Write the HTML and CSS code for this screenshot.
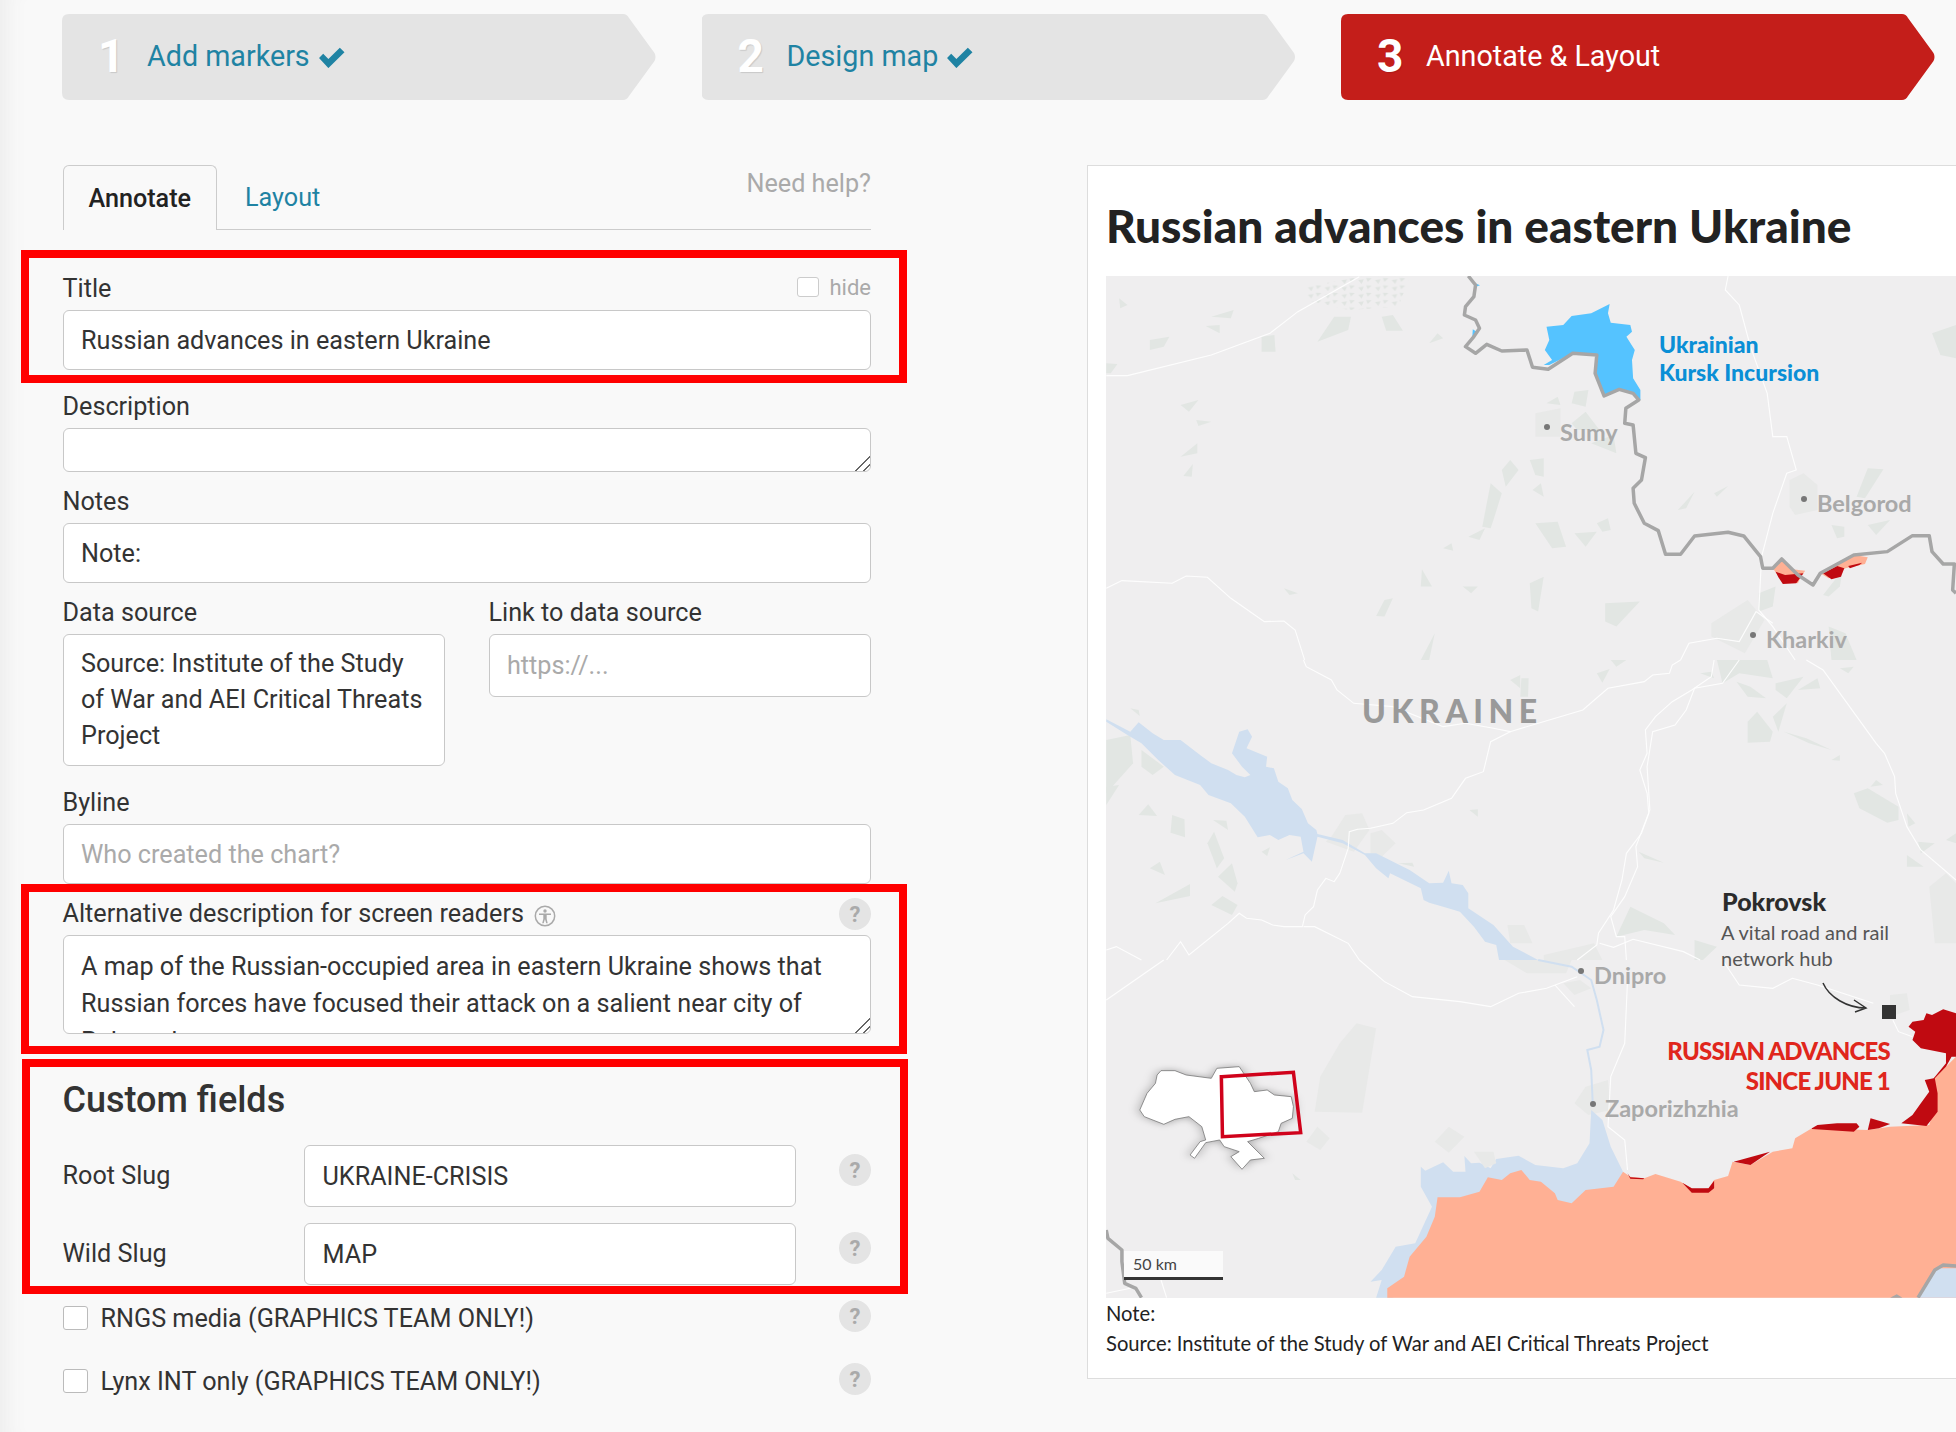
FILE: index.html
```html
<!DOCTYPE html>
<html lang="en">
<head>
<meta charset="utf-8">
<title>Annotate &amp; Layout</title>
<link rel="stylesheet" href="styles.css">
</head>
<body>
<div class="page">
  <nav class="steps">
    <div class="step"><span class="num">1</span><span class="step-label">Add markers</span>
      <svg class="tick" viewBox="0 0 26 20"><path d="M1 10.5 5 6.5 10 11.5 21 .5 25.500 5 10 20.200Z"/></svg></div>
    <div class="step"><span class="num">2</span><span class="step-label">Design map</span>
      <svg class="tick" viewBox="0 0 26 20"><path d="M1 10.5 5 6.5 10 11.5 21 .5 25.500 5 10 20.200Z"/></svg></div>
    <div class="step step-active"><span class="num">3</span><span class="step-label">Annotate &amp; Layout</span></div>
  </nav>

  <div class="content">
    <form class="form">
      <div class="tabs">
        <a class="tab tab-active">Annotate</a>
        <a class="tab">Layout</a>
        <a class="need-help">Need help?</a>
      </div>

      <div class="field field-wide">
        <div class="field-head"><label class="lbl">Title</label>
          <span class="hide"><span class="box box-sm"></span>hide</span></div>
        <input class="ctl" value="Russian advances in eastern Ukraine">
      </div>
      <div class="field">
        <div class="field-head"><label class="lbl">Description</label></div>
        <textarea class="ctl ta-desc"></textarea>
      </div>
      <div class="field">
        <div class="field-head"><label class="lbl">Notes</label></div>
        <input class="ctl" value="Note:">
      </div>
      <div class="field-pair">
        <div class="pair-a">
          <div class="field-head"><label class="lbl">Data source</label></div>
          <textarea class="ctl ta-source">Source: Institute of the Study of War and AEI Critical Threats Project</textarea>
        </div>
        <div class="pair-b">
          <div class="field-head"><label class="lbl">Link to data source</label></div>
          <input class="ctl ctl-link" placeholder="https://...">
        </div>
      </div>
      <div class="field">
        <div class="field-head"><label class="lbl">Byline</label></div>
        <input class="ctl" placeholder="Who created the chart?">
      </div>
      <div class="field">
        <div class="field-head"><label class="lbl">Alternative description for screen readers
          <svg class="a11y" viewBox="0 0 22 22"><circle cx="11" cy="11" r="9.700"/><circle class="a11y-fill" cx="11" cy="6" r="1.700"/><path class="a11y-fill" d="M5 8.500h12v1.400h-4.300v4.100l1 4.200h-1.500l-1.200-4h-.1l-1.200 4H8.200l1.100-4.200V9.900H5z"/></svg></label>
          <span class="help">?</span></div>
        <textarea class="ctl ta-alt">A map of the Russian-occupied area in eastern Ukraine shows that Russian forces have focused their attack on a salient near city of Pokrovsk</textarea>
      </div>

      <h2 class="custom-title">Custom fields</h2>
      <div class="slug-row"><label class="lbl">Root Slug</label><input class="ctl" value="UKRAINE-CRISIS"><span class="help help-up">?</span></div>
      <div class="slug-row"><label class="lbl">Wild Slug</label><input class="ctl" value="MAP"><span class="help help-up">?</span></div>
      <div class="check-row check-first"><span class="box"></span><span class="lbl">RNGS media (GRAPHICS TEAM ONLY!)</span><span class="help">?</span></div>
      <div class="check-row"><span class="box"></span><span class="lbl">Lynx INT only (GRAPHICS TEAM ONLY!)</span><span class="help">?</span></div>
    </form>

    <section class="chart">
      <h1 class="chart-title">Russian advances in eastern Ukraine</h1>
      <svg class="map" viewBox="1106 276 850 1022" width="850" height="1022">
        <defs>
          <pattern id="speckle" width="30" height="22" patternUnits="userSpaceOnUse">
            <polygon class="speck" points="2,2 12,3 5,14"/>
            <polygon class="speck" points="18,8 28,6 24,20"/>
          </pattern>
        </defs>
        <rect x="1106" y="276" width="850" height="1022" class="land"/>

        <g transform="translate(1080 160) scale(.5587 .3333)">
          <polygon class="speckled" points="405,380 500,350 590,350 570,440 480,450 405,420"/>
          <g class="patch-lt">
            <polygon points="815,760 860,745 860,830 815,830"/>
            <polygon points="1270,960 1295,940 1320,975 1320,1050 1280,1065 1270,1040"/>
            <polygon points="1130,1390 1195,1320 1225,1380 1190,1480 1130,1430"/>
          </g>
          <g class="patch">
            <polygon points="70,415 85,435 72,445"/><polygon points="125,540 160,530 150,560 125,570"/>
            <polygon points="225,498 250,495 250,520"/><polygon points="235,470 275,450 270,475"/>
            <polygon points="180,735 212,720 195,755"/><polygon points="208,780 235,785 212,798"/>
            <polygon points="180,890 210,850 210,880"/><polygon points="185,948 202,912 200,950"/>
            <polygon points="325,530 348,525 350,575 325,575"/><polygon points="47,610 67,612 55,640 47,640"/>
            <polygon points="425,545 455,470 485,470 480,510"/><polygon points="540,470 560,465 578,512 548,512"/>
            <polygon points="625,550 640,520 650,535"/><polygon points="835,730 855,710 860,735"/>
            <polygon points="885,695 910,690 905,740 880,730"/><polygon points="880,790 905,755 930,810 890,810"/>
            <polygon points="915,850 955,825 960,880"/><polygon points="755,930 770,900 785,930 762,980"/>
            <polygon points="805,900 830,895 830,950 815,945"/><polygon points="720,1100 735,970 755,1000 740,1080 735,1105"/>
            <polygon points="810,990 825,970 830,1010"/><polygon points="815,1090 855,1085 870,1160 845,1165"/>
            <polygon points="925,1090 945,1075 950,1110 935,1115"/><polygon points="885,1120 925,1115 905,1160"/>
            <polygon points="1070,1050 1100,995 1085,1045"/><polygon points="1135,1000 1160,978 1140,1010"/>
            <polygon points="1390,1010 1410,925 1438,928 1405,1015"/><polygon points="1410,1095 1450,1080 1425,1125"/>
            <polygon points="1345,1095 1368,1100 1368,1130 1355,1135"/><polygon points="1525,520 1568,495 1568,595 1540,585"/>
            <polygon points="610,1280 612,1228 630,1280"/><polygon points="685,1280 712,1280 700,1300"/>
            <polygon points="805,1270 830,1250 820,1355 808,1345"/><polygon points="545,1320 560,1315 545,1370 530,1368"/>
            <polygon points="940,1330 1002,1325 960,1400 940,1385"/><polygon points="1215,1300 1245,1280 1240,1340 1215,1355"/>
            <polygon points="1330,1305 1365,1230 1360,1280 1340,1310"/><polygon points="1340,1400 1370,1420 1390,1500 1345,1500"/>
            <polygon points="610,1500 635,1420 625,1500"/><polygon points="650,1165 665,1150 668,1172"/>
            <polygon points="695,1130 725,1105 715,1140"/><polygon points="365,1285 390,1300 375,1305"/>
          </g>
          <polyline class="road" points="1160,348 1155,390 1180,435 1200,560 1230,700 1240,830 1265,830 1282,930 1265,940 1240,1060 1220,1190 1215,1350 1240,1400 1280,1500"/>
          <polyline class="road" points="500,350 390,455 340,520 235,585 85,647 47,647"/>
          <polyline class="road" points="47,1285 75,1262 165,1270 190,1248 228,1252 270,1315 330,1385 365,1383 385,1410 402,1500"/>
          <polyline class="road" points="1075,1500 1090,1450 1140,1435 1180,1445 1210,1355 1240,1390"/>
          <polygon class="kursk" points="948,432 945,460 950,488 985,495 988,515 978,530 993,570 988,600 990,655 1003,690 1003,720 990,700 965,688 938,708 922,640 925,585 882,580 840,615 830,615 845,600 832,570 840,540 835,500 865,495 880,468 915,460"/>
          <polygon class="kursk" points="705,368 716,376 706,382"/><polygon class="kursk" points="703,508 710,515 702,535"/>
          <polygon class="peach" points="1240,1225 1256,1197 1275,1228 1298,1232 1290,1250 1285,1270 1255,1260"/>
          <polygon class="peach" points="1325,1240 1385,1185 1410,1192 1405,1212 1370,1225 1340,1255"/>
          <polygon class="red" points="1245,1235 1262,1245 1295,1240 1282,1270 1258,1272 1250,1252"/>
          <polygon class="red" points="1330,1240 1355,1218 1368,1225 1362,1250 1345,1258"/>
          <polygon class="red" points="1375,1218 1400,1208 1395,1215 1378,1225"/>
          <polyline class="frontier" points="695,348 708,375 705,410 690,440 688,465 708,480 715,505 705,530 690,560 708,580 728,553 755,573 800,570 810,622 838,628 882,580 925,585 922,640 938,708 965,688 990,700 1000,720 977,745 975,790 990,795 995,880 1012,893 1005,960 990,985 992,1030 1010,1090 1035,1112 1048,1183 1075,1183 1100,1128 1160,1117 1188,1128 1218,1190 1222,1225 1240,1225 1256,1197 1285,1245 1312,1275 1325,1240 1385,1185 1445,1175 1490,1127 1520,1127 1525,1175 1545,1212 1565,1212 1562,1290 1568,1300"/>
        </g>

        <g transform="translate(1080 660) scale(.5587 .3333)">
          <g class="patch-lt">
            <polygon points="450,530 475,465 505,460 518,510 490,575 440,545"/><polygon points="520,520 540,510 565,550 540,590 520,585"/>
            <polygon points="765,795 795,795 810,850 770,850"/><polygon points="830,885 920,850 935,900 830,900"/>
            <polygon points="1520,680 1550,640 1568,670 1568,850 1530,850"/>
          </g>
          <g class="patch">
            <polygon points="47,240 90,225 95,310 47,400"/><polygon points="110,270 150,320 130,345 110,320"/>
            <polygon points="47,380 70,375 47,435"/><polygon points="90,145 105,150 107,168"/>
            <polygon points="105,465 122,433 138,468"/><polygon points="165,465 187,478 188,532 162,518"/>
            <polygon points="238,480 262,482 265,510"/><polygon points="228,550 240,515 258,595 245,625"/>
            <polygon points="125,625 143,605 152,645"/><polygon points="135,730 197,672 197,708"/>
            <polygon points="247,650 272,610 282,670 277,695"/><polygon points="235,735 255,708 282,735 272,765"/>
            <polygon points="570,610 595,608 598,620"/><polygon points="770,60 788,45 788,85"/>
            <polygon points="790,55 803,55 802,110 788,110"/><polygon points="925,40 948,27 935,68"/>
            <polygon points="950,0 978,0 960,20"/><polygon points="1110,40 1130,35 1135,55"/>
            <polygon points="1140,0 1230,0 1240,55 1180,40 1150,70"/><polygon points="1175,65 1200,80 1228,115 1195,110"/>
            <polygon points="1245,70 1295,50 1265,115 1245,90"/><polygon points="1285,90 1320,55 1325,85"/>
            <polygon points="1195,185 1212,155 1240,215 1235,245 1195,248"/><polygon points="1240,170 1265,130 1250,215"/>
            <polygon points="1260,215 1300,235 1345,270 1305,250"/><polygon points="1345,300 1360,285 1360,302"/>
            <polygon points="1385,400 1410,385 1465,440 1465,480 1445,488 1395,445"/><polygon points="1415,380 1425,360 1437,375"/>
            <polygon points="1480,460 1495,490 1483,500"/><polygon points="1500,545 1530,550 1505,580"/>
            <polygon points="1480,585 1510,620 1480,620"/><polygon points="1550,540 1568,520 1568,550"/>
            <polygon points="1000,575 1045,608 1010,595"/><polygon points="960,830 985,740 1045,790 1065,825 1010,810"/>
            <polygon points="1100,840 1140,860 1115,900 1100,900"/><polygon points="1360,25 1385,20 1375,40"/>
            <polygon points="697,450 712,448 712,470"/><polygon points="325,575 340,562 335,588"/>
          </g>
          <polygon class="water" points="47,178 90,215 105,187 130,220 150,240 180,240 215,285 235,310 265,330 280,345 295,352 305,345 290,320 272,280 285,215 300,208 308,230 298,265 335,290 333,320 347,325 355,365 372,385 380,420 397,447 408,490 423,510 425,522 470,540 510,580 530,580 590,630 625,670 650,668 660,632 665,670 685,675 695,700 695,745 740,795 775,860 820,900 770,900 750,900 745,855 725,845 705,800 680,755 650,740 625,728 615,720 610,685 555,640 552,655 530,625 510,585 470,550 425,530 415,605 400,580 368,600 400,575 395,530 375,525 355,540 340,525 318,532 295,470 270,430 230,405 215,375 170,345 140,300 110,250 85,225 47,185"/>
          <polyline class="road" points="400,0 405,20 450,60 460,90 490,130 560,140 650,200 690,190 740,205 770,215 900,150 945,85 1010,65 1025,45 1055,40 1060,15 1075,0"/>
          <polyline class="road" points="770,215 735,245 722,335 690,355 665,415 615,450 585,458 560,490 520,505 497,508 482,515 480,565 465,640 455,665 440,655 425,690 418,740 403,765 398,800 365,800 345,795 325,780 298,775 285,760 265,790 195,885 180,845 155,900"/>
          <polyline class="road" points="1135,0 1130,50 1095,90 1060,125 1030,170 1012,210 1015,280 1002,330 1015,400 1018,460 1005,520 978,580 970,660 955,750 928,820 925,855 890,900"/>
          <polyline class="road" points="1180,0 1150,70 1100,85 1085,150 1065,195 1025,215 1015,320 1020,450 995,560 998,620 975,710 950,770 960,830 975,830 978,900"/>
          <polyline class="road" points="1300,0 1330,30 1425,250 1440,280 1458,350 1460,400 1480,500 1505,570 1568,660"/>
          <polyline class="road" points="400,800 420,800 480,850 500,900"/>
          <polyline class="road" points="47,870 65,860 110,900"/>
          <polyline class="road" points="930,850 955,862 990,838 1080,875 1110,900"/>
        </g>

        <g transform="translate(1080 960) scale(.5587 .3333)">
          <g class="patch-lt">
            <polygon points="760,0 880,0 870,40 800,40"/><polygon points="865,70 895,60 915,85 885,105"/>
            <polygon points="430,350 465,250 495,190 530,205 505,458 420,455"/>
            <polygon points="405,545 425,500 447,535 430,570"/><polygon points="635,545 660,500 688,530 660,578"/>
            <polygon points="885,430 905,380 945,360 950,450 910,465"/><polygon points="1450,105 1480,100 1485,150 1450,170"/>
          </g>
          <polygon class="patch" points="380,640 395,660 385,660"/>
          <polyline class="road" points="1150,0 1180,75 1240,85 1275,55 1320,75 1420,130"/>
          <polyline class="road" points="500,0 545,65 595,110 680,125 735,140 785,100 835,85 890,50"/>
          <polyline class="road" points="850,75 885,140"/>
          <polyline class="road" points="150,0 47,120"/>
          <polyline class="road" points="980,60 975,250 950,350 945,500 975,540 980,630"/>
          <polyline class="road" points="1455,180 1465,215 1490,230"/>
          <polyline class="road" points="47,1000 90,985"/>
          <polyline class="road" points="145,960 155,1013"/>
          <polyline class="river" points="820,0 880,20 915,60 925,120 937,210 930,260 908,270 915,330 918,440"/>
          <polygon class="water" points="530,1013 540,960 520,965 540,930 565,860 600,850 630,740 610,680 610,620 618,632 650,607 668,635 690,635 688,588 700,610 715,608 735,625 745,597 785,587 815,615 865,625 890,610 912,550 915,450 935,480 950,560 972,635 980,720 700,760 560,1013"/>
          <polygon class="patch-lt" points="705,575 740,575 745,610 725,625"/>
          <polygon class="peach" points="550,1013 550,985 580,950 590,890 620,830 635,770 640,712 680,712 715,695 730,652 755,660 770,640 790,630 805,660 825,665 850,700 855,720 880,730 905,690 955,680 972,635 985,650 1010,655 1030,642 1075,665 1100,690 1125,685 1135,660 1160,648 1168,605 1200,615 1240,575 1275,565 1280,535 1310,505 1410,510 1450,500 1520,495 1530,440 1525,360 1550,320 1568,290 1568,1013"/>
          <polygon class="red" points="1483,200 1490,185 1510,180 1515,160 1525,165 1545,148 1568,160 1568,290 1560,290 1550,320 1530,355 1535,400 1535,455 1515,498 1470,490 1490,465 1505,430 1520,395 1512,360 1528,355 1550,310 1550,280 1505,265 1490,240 1495,215"/>
          <polygon class="red" points="1310,505 1320,495 1355,490 1390,490 1395,500 1385,515 1310,507"/>
          <polygon class="red" points="1415,475 1450,492 1430,505 1410,510"/>
          <polygon class="red" points="1170,605 1235,575 1200,615"/>
          <polygon class="red" points="1078,668 1095,685 1125,685 1135,662 1135,685 1125,698 1095,698"/>
          <polygon class="red" points="980,640 985,652 1010,655 1008,658 985,656"/>
          <polygon class="water" points="1500,1013 1535,925 1568,925 1568,1013"/>
          <polyline class="frontier" points="1500,1013 1530,930 1545,915 1568,918"/>
          <polyline class="frontier" points="47,810 50,835 75,870 75,905 80,970 100,985 110,1013"/>
          <polygon class="frontier-fill" points="1450,1013 1462,1003 1472,1013"/>
          <g class="inset">
            <polygon class="inset-land" points="145,332 170,332 190,345 235,355 245,325 285,320 295,345 305,370 312,395 335,390 348,405 378,410 382,440 380,475 360,490 355,515 320,535 300,545 330,595 305,600 290,628 270,590 285,575 258,560 250,540 225,548 205,595 197,585 215,545 225,540 218,500 195,470 170,478 150,493 115,470 107,450 120,400 135,370 138,345"/>
          </g>
          <polygon class="inset-frame" points="253,350 382,337 395,518 255,530"/>
        </g>

        <rect class="scale-bg" x="1124" y="1251" width="99" height="26"/>
        <rect class="scale-bar" x="1124" y="1277" width="99" height="3"/>
        <text class="t-scale" x="1133" y="1270">50 km</text>

        <text class="t-kursk" x="1659" y="353">Ukrainian</text>
        <text class="t-kursk" x="1659" y="381">Kursk Incursion</text>
        <circle class="dot" cx="1547" cy="427" r="3"/><text class="t-city" x="1560" y="441">Sumy</text>
        <circle class="dot" cx="1804" cy="499" r="3"/><text class="t-city" x="1817" y="512">Belgorod</text>
        <circle class="dot" cx="1753" cy="635" r="3"/><text class="t-city" x="1766" y="648">Kharkiv</text>
        <circle class="dot" cx="1581" cy="971" r="3"/><text class="t-city" x="1594" y="984">Dnipro</text>
        <circle class="dot" cx="1593" cy="1104" r="3"/><text class="t-city" x="1605" y="1117">Zaporizhzhia</text>
        <text class="t-country" x="1362" y="723">UKRAINE</text>
        <text class="t-pok" x="1722" y="911">Pokrovsk</text>
        <text class="t-pok-sub" x="1721" y="940">A vital road and rail</text>
        <text class="t-pok-sub" x="1721" y="966">network hub</text>
        <rect class="pok-mark" x="1882" y="1005" width="14" height="14"/>
        <path class="pok-arrow" d="M1823 983c6 14 24 25 43 25M1854 1000l12 8-11 4"/>
        <text class="t-adv" x="1890" y="1060">RUSSIAN ADVANCES</text>
        <text class="t-adv" x="1890" y="1090">SINCE JUNE 1</text>
      </svg>
      <p class="chart-note">Note:</p>
      <p class="chart-note">Source: Institute of the Study of War and AEI Critical Threats Project</p>
    </section>
  </div>
</div>
<div class="mark mark-title"></div>
<div class="mark mark-alt"></div>
<div class="mark mark-custom"></div>
</body>
</html>
```

FILE: styles.css
```css
* { box-sizing: border-box; }
html, body { margin: 0; height: 1432px; overflow: hidden; }
body {
  position: relative;
  background: #f9f9f9;
  box-shadow: inset 26px 0 22px -20px #ececec;
  color: #333;
  font-family: Roboto, "Liberation Sans", sans-serif;
  font-size: 25.200px;
}
.page { padding: 14px 0 0 62.500px; width: 1956px; }

/* steps */
.steps { display: flex; gap: 46px; margin-bottom: 65px; margin-left: -.5px; }
.step {
  width: 593.5px;
  height: 86px;
  flex: none;
  display: flex;
  align-items: center;
  background: #e4e4e4;
  color: #1f83a3;
  font-size: 28.700px;
  clip-path: path("M7 0H561Q565 0 567 4L592.500 39Q594.500 43 592.500 47L567 82Q565 86 561 86H7Q0 86 0 79V7Q0 0 7 0Z");
}
.step-active { background: #c41e1a; color: #fff; }
.step-label { position: relative; top: -1px; }
.num {
  width: 85px;
  padding-left: 36px;
  color: #fff;
  font-size: 46px;
  font-weight: 700;
  text-shadow: 1px 1px 1px rgba(0,0,0,.12);
  position: relative;
  top: -1px;
}
.tick { width: 27px; height: 21px; margin-left: 8px; fill: #1f83a3; }

/* form */
.content { display: flex; align-items: flex-start; }
.form { width: 808.500px; flex: none; }
.tabs { display: flex; height: 65px; border-bottom: 1px solid #ccc; margin-bottom: 44px; position: relative; }
.tab {
  width: 154.500px;
  height: 65px;
  display: flex;
  align-items: center;
  justify-content: center;
  color: #1f83a3;
}
.tab + .tab { width: auto; padding: 0 0 0 28px; }
.tab-active {
  background: #f9f9f9;
  color: #222;
  font-weight: 500;
  border: 1px solid #ccc;
  border-bottom: 0;
  border-radius: 6px 6px 0 0;
}
.need-help { margin-left: auto; color: #aaa; line-height: 38px; }

.field { margin-bottom: 15px; }
.field-wide { margin-bottom: 22px; }
.field-head { display: flex; justify-content: space-between; align-items: center; height: 30px; margin-bottom: 6px; }
.lbl { color: #333; line-height: 30px; }
.hide { display: flex; align-items: center; color: #aaa; font-size: 22px; position: relative; top: -2px; }
.box {
  display: block;
  width: 25px;
  height: 24px;
  flex: none;
  background: #fff;
  border: 1px solid #bbb;
  border-radius: 3px;
}
.box-sm { width: 22px; height: 20px; margin-right: 10px; border-color: #ccc; }

.ctl {
  display: block;
  width: 100%;
  height: 60px;
  margin: 0;
  padding: 0 17.500px;
  background: #fff;
  border: 1px solid #c8c8c8;
  border-radius: 6px;
  color: #333;
  font: 25.200px Roboto, "Liberation Sans", sans-serif;
  outline: none;
}
.ctl::placeholder { color: #aaa; opacity: 1; }
textarea.ctl { padding-top: 11px; line-height: 36px; overflow: hidden; }
textarea.ctl::-webkit-resizer {
  background: linear-gradient(135deg, transparent 48%, #666 48%, #666 55%, transparent 55%, transparent 74%, #666 74%, #666 81%, transparent 81%);
}
.ta-desc { height: 44px; resize: both; }
.ta-source { height: 132px; resize: none; }
textarea.ta-alt { height: 99px; resize: both; padding-top: 11.500px; line-height: 37.500px; }
.ctl-link { height: 63px; }

.field-pair { display: flex; gap: 43.500px; margin-bottom: 22px; }
.pair-a { width: 382.500px; flex: none; }
.pair-b { flex: 1; }

.help {
  display: flex;
  align-items: center;
  justify-content: center;
  width: 32px;
  height: 32px;
  flex: none;
  border-radius: 50%;
  background: #e4e4e4;
  color: #aaa;
  font-size: 22px;
  font-weight: 700;
}
.a11y { width: 22px; height: 22px; vertical-align: -5px; margin-left: 4px; fill: none; stroke: #aaa; stroke-width: 1.500; }
.a11y-fill { fill: #aaa; stroke: none; }

.custom-title { margin: 43px 0 22px; font-size: 36px; line-height: 46px; font-weight: 500; color: #333; }
.slug-row { display: flex; align-items: center; height: 62px; margin-bottom: 16px; }
.slug-row .lbl { width: 241.500px; flex: none; }
.slug-row .ctl { width: 492px; height: 62px; flex: none; }
.slug-row .help { margin-left: auto; margin-top: -12px; }
.check-row { display: flex; align-items: center; height: 32px; margin-bottom: 31px; }
.check-first { margin-top: -1px; }
.check-row .box { margin-right: 13px; margin-top: 4px; }
.check-row .lbl { margin-top: 5px; }
.check-row .help { margin-left: auto; }

/* chart */
.chart {
  width: 900px;
  height: 1214px;
  margin-left: 216px;
  flex: none;
  background: #fff;
  border: 1px solid #ddd;
  padding: 31px 0 0 18px;
  overflow: hidden;
}
.chart-title {
  position: relative;
  top: -2px;
  margin: 0 0 17px;
  color: #222;
  font: 900 46px/62px Lato, "Noto Sans", sans-serif;
}
.map { display: block; }
.chart-note { margin: 0; color: #222; font: 20.200px/30px Lato, "Noto Sans", sans-serif; }

.land { fill: #efeeef; }
.patch, .patch polygon { fill: #e2e6e3; }
.patch-lt, .patch-lt polygon { fill: #e8e9e8; }
.speckled { fill: url(#speckle); }
.speck { fill: #e0e4e1; }
.water { fill: #d0dff0; }
.kursk { fill: #55c3ff; }
.peach { fill: #ffb094; }
.red { fill: #c00a11; }
.road { fill: none; stroke: #fff; stroke-width: 1.100; opacity: .9; vector-effect: non-scaling-stroke; }
.river { fill: none; stroke: #d0dff0; stroke-width: 2; vector-effect: non-scaling-stroke; }
.frontier { fill: none; stroke: #a6a6a6; stroke-width: 3.500; stroke-linejoin: round; vector-effect: non-scaling-stroke; }
.frontier-fill { fill: #a6a6a6; }
.inset { filter: drop-shadow(0 0 10px rgba(0,0,0,.3)); }
.inset-land { fill: #fff; stroke: #777; stroke-width: .8; vector-effect: non-scaling-stroke; }
.inset-frame { fill: none; stroke: #d0021b; stroke-width: 3.500; vector-effect: non-scaling-stroke; }
.scale-bg { fill: #fafafa; }
.scale-bar { fill: #333; }
.dot { fill: #777; }
.pok-mark { fill: #333; }
.pok-arrow { fill: none; stroke: #333; stroke-width: 1.500; }

.t-scale, .t-city, .t-kursk, .t-country, .t-pok, .t-pok-sub, .t-adv { font-family: Lato, "Noto Sans", sans-serif; }
.t-scale { fill: #444; font-size: 16px; }
.t-city { fill: #a9a9a9; font-size: 23.500px; font-weight: 700; }
.t-kursk { fill: #0a8fd6; font-size: 23px; font-weight: 900; }
.t-country { fill: #999; font-size: 32px; font-weight: 900; letter-spacing: 5.500px; }
.t-pok { fill: #2b2b2b; font-size: 25px; font-weight: 900; }
.t-pok-sub { fill: #555; font-size: 20px; }
.t-adv { fill: #e0261c; font-size: 24px; font-weight: 900; text-anchor: end; letter-spacing: -.8px; }

/* review highlights laid over the form */
.mark { position: absolute; border: solid #ff0000; border-width: 8px; pointer-events: none; }
.mark-title { left: 21px; top: 250px; width: 886px; height: 133px; }
.mark-alt { left: 21px; top: 884px; width: 886px; height: 170px; }
.mark-custom { left: 22px; top: 1059px; width: 886px; height: 235px; }
```
